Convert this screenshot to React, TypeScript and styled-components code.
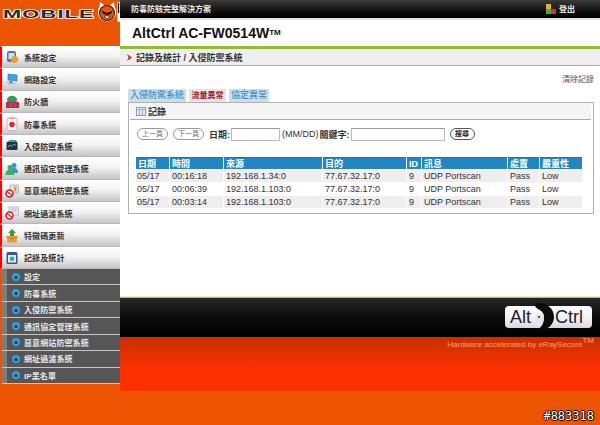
import React from "react";
import styled, { createGlobalStyle } from "styled-components";

const Global = createGlobalStyle`
  html, body { margin: 0; padding: 0; background: #ec5400; }
  * { box-sizing: border-box; }
  body { font-family: "Liberation Sans", "Noto Sans CJK TC", sans-serif; }
`;
const Page = styled.div`
  position: relative; width: 600px; height: 425px; overflow: hidden; background: #ec5400;
  display: grid; grid-template-columns: 120px 480px; align-items: start;
  font-family: "Liberation Sans", "Noto Sans CJK TC", sans-serif;
`;
const Sidebar = styled.aside`display: flex; flex-direction: column;`;
const LogoBox = styled.div`
  height: 46px; display: flex; align-items: flex-start; padding: 1px 0 0 3px;
  & > svg { flex: none; }
`;
const LogoWord = styled.div`
  flex: none; width: 95px; height: 20px; padding-top: 6px;
  font-size: 11px; line-height: 14px; font-weight: 700; color: #2a2a2a;
  -webkit-text-stroke: 1.3px #fff; paint-order: stroke fill;
  letter-spacing: .6px; transform: scaleX(1.98); transform-origin: left center;
`;
const Menu = styled.nav`display: flex; flex-direction: column;`;
const Item = styled.div`
  height: 22.3px; display: flex; align-items: center; gap: 5px; padding-left: 3px;
  border-left: 2px solid #f00; border-bottom: 1px solid #b8b8b8; border-top: 1px solid #fff;
  background: linear-gradient(#fff 0%, #f2f2f2 45%, #c6c6c6 100%);
  font-size: 8px; font-weight: 700; color: #333; letter-spacing: .1px;
`;
const IconSlot = styled.span`width: 14px; height: 14px; display: block; flex: none;`;
const SubMenu = styled.div`display: flex; flex-direction: column; margin-left: 2px;`;
const SubItem = styled.div`
  height: 16.45px; display: flex; align-items: center; gap: 4px; padding-left: 10px;
  background: linear-gradient(90deg, #7c7c7c 0 5px, #565656 5px);
  border-bottom: 1px solid #c4c4c4;
  font-size: 8px; font-weight: 700; color: #e6e6e6; letter-spacing: .1px;
`;
const Main = styled.main`display: flex; flex-direction: column;`;
const TopBar = styled.header`
  height: 18px; display: flex; align-items: center; justify-content: space-between;
  padding: 0 25px 1px 11px; background: linear-gradient(#3a3a3a, #0a0a0a 70%, #000);
  font-size: 8px; font-weight: 700; color: #e8e8e8;
`;
const Logout = styled.div`display: flex; align-items: center; gap: 3px; font-size: 8px;`;
const TitleBar = styled.div`
  height: 28px; background: #fff; border-top: 2px solid #e6e6e6; padding-left: 12px;
  display: flex; align-items: center; font-size: 14px; font-weight: 700; color: #111;
`;
const Sup = styled.sup`font-size: 8px; line-height: 0; vertical-align: 4px; font-weight: 700;`;
const GreenBar = styled.div`height: 3px; background: #8fbf2a;`;
const Crumb = styled.div`
  height: 17px; background: #eee; border-bottom: 1px solid #aaa; padding-left: 7px;
  display: flex; align-items: center; gap: 4px; font-size: 9px; font-weight: 700; color: #333;
`;
const Content = styled.section`
  height: 230px; background: #fff; padding: 7px 6px 0 8px; display: flex; flex-direction: column;
`;
const Clear = styled.div`
  height: 14px; text-align: right; font-size: 8px; line-height: 14px; color: #555;
`;
const Tabs = styled.div`display: flex; gap: 3px; margin-top: 2px; height: 13px;`;
const Tab = styled.div<{ $alert?: boolean }>`
  height: 13px; padding: 0 ${p => (p.$alert ? "2.5px" : "2px")}; line-height: 13px;
  font-size: ${p => (p.$alert ? 8 : 9)}px; font-weight: ${p => (p.$alert ? 700 : 400)};
  color: ${p => (p.$alert ? "#a8101c" : "#2b7fb8")};
  background: ${p => (p.$alert ? "#e4e4e4" : "#c6e0ee")};
  white-space: nowrap;
`;
const Panel = styled.div`
  height: 112px; border: 1px solid #b0b0b0; padding: 0 0 0 1px; display: flex; flex-direction: column;
`;
const PanelHead = styled.div`
  height: 17px; margin-right: 2px; background: #f5f5f5; border-bottom: 1px solid #aaa;
  display: flex; align-items: center; gap: 2px; padding-left: 6px;
  font-size: 9px; font-weight: 700; color: #333;
`;
const Search = styled.form`
  display: flex; align-items: center; margin: 7px 0 0 7px; height: 14px;
  font-size: 9px; color: #333;
`;
const Pill = styled.button<{ $strong?: boolean }>`
  height: 12px; width: ${p => (p.$strong ? 25 : 31)}px; padding: 0; border-radius: 7px; background: #fff; flex: none;
  border: 1px solid ${p => (p.$strong ? "#555" : "#999")}; margin-right: ${p => (p.$strong ? 0 : 5)}px;
  font: ${p => (p.$strong ? 700 : 400)} 7px "Liberation Sans", "Noto Sans CJK TC", sans-serif;
  color: ${p => (p.$strong ? "#222" : "#777")}; line-height: 10px;
`;
const Field = styled.input<{ $w: number }>`
  flex: none; width: ${p => p.$w}px; height: 13px; margin: 0 2px 0 1px; padding: 0;
  border: 1px solid #bbb; border-top-color: #999; background: #fff; outline: 0;
`;
const Label = styled.span`font-weight: 700; white-space: nowrap;`;
const Plain = styled.span`white-space: nowrap;`;
const Gap = styled.span<{ $w: number }>`width: ${p => p.$w}px; flex: none;`;
const Table = styled.table`
  width: 448px; margin: 15px 0 0 5px; border-collapse: separate; border-spacing: 1px 1px;
  table-layout: fixed; font-size: 9px; color: #333;
`;
const Th = styled.th<{ $w: number }>`
  width: ${p => p.$w}px; height: 12px; padding: 0 0 0 2px; background: #2286c3; color: #fff;
  text-align: left; font-weight: 700; font-size: 9px; line-height: 10px; border-top: 1px solid #1a78b4;
`;
const Tr = styled.tr<{ $shade: boolean }>`
  & > td { background: ${p => (p.$shade ? "#eee" : "#fff")}; }
`;
const Td = styled.td`
  height: 12px; padding: 0 0 0 2px; white-space: nowrap; line-height: 11px;
  &:first-child { padding-left: 1px; }
`;
const GreenLine = styled.div`height: 2px; background: #9bd04a; border-top: 1px solid #e6f4c8;`;
const FooterBlack = styled.div`
  height: 39px; background: linear-gradient(#262626, #0c0c0c 50%, #000);
  display: flex; justify-content: flex-end; align-items: flex-start; padding: 8px 8px 0 0;
`;
const AltLogo = styled.div`
  width: 87px; height: 22px; background: linear-gradient(#fff, #f0f0f0 60%, #d8d8d8); border-radius: 4px;
  display: flex; align-items: center; padding-left: 5px;
  font-size: 18px; color: #222; line-height: 22px;
  & > svg { flex: none; margin: -3px 1px; }
`;
const FooterRed = styled.div`
  height: 54px; background: linear-gradient(#c43000, #e83000 35%, #ff3000 65%);
  display: flex; justify-content: flex-end; padding: 2px 6px 0 0;
  font-size: 8px; font-weight: 400; line-height: 12px; color: #f68050; white-space: nowrap;
  text-shadow: 0 0 .6px #f68050;
`;
const FootSup = styled.sup`font-size: 8px; line-height: 0; vertical-align: 4px; font-weight: 400;`;
const Stamp = styled.div`
  position: absolute; right: 6px; top: 410px; font-family: "DejaVu Sans Mono", monospace; font-size: 12px;
  line-height: 12px; color: #fff; text-shadow: 1px 0 #000, -1px 0 #000, 0 1px #000, 0 -1px #000;
`;

const Mascot = () => (
  <svg width="22" height="22" viewBox="0 0 22 22">
    <path d="M2 1l4.500 3.500h5L16 1l.6 5a9.200 9.200 0 1 1-15.200 0z" fill="#fff" />
    <circle cx="9" cy="12" r="8" fill="#111" />
    <circle cx="9" cy="12" r="7" fill="#ec5400" />
    <path d="M3 9.500l6 2.500 6-2.500-2.500 3.500-3.500 1-3.500-1z" fill="#111" />
    <path d="M6 15h6l-3 3z" fill="#fff" stroke="#111" strokeWidth=".6" />
    <rect x="19" y="1" width="3" height="20" rx="1" fill="#fff" />
    <rect x="19.800" y="2" width="1.400" height="10" fill="#111" />
  </svg>
);
const i = { width: 14, height: 14, viewBox: "0 0 14 14" };
const icons: React.ReactNode[] = [
  <svg {...i}><rect x="2" y="1" width="9" height="11" rx="2" fill="#4a78b8" /><rect x="3.5" y="3" width="6" height="6" fill="#cfe0f2" /><circle cx="9.5" cy="9.5" r="3.6" fill="#f2a024" /></svg>,
  <svg {...i}><path d="M3 2l9 1v6l-9-1z" fill="#39a6d8" stroke="#2a6f9e" strokeWidth=".6" /><path d="M1 9l7 1 4 2-8 1z" fill="#9cc7e2" /><rect x="5" y="9" width="2" height="2" fill="#57768c" /></svg>,
  <svg {...i}><ellipse cx="7" cy="5" rx="5" ry="4.2" fill="#2e9e5a" /><rect x="1" y="7" width="13" height="6" rx="1" fill="#a8224a" /><path d="M2 9h11M2 11h11M6 7v6M10 7v6" stroke="#e05a80" strokeWidth=".6" /></svg>,
  <svg {...i}><rect x="2" y="1" width="10" height="12.5" rx="1" fill="#f0eef2" stroke="#b8a8c0" strokeWidth=".7" /><circle cx="7" cy="7.5" r="2.7" fill="#e02a2a" /><rect x="4" y="0.5" width="6" height="1.5" fill="#c8a8b8" /></svg>,
  <svg {...i}><rect x="1.5" y="3" width="11" height="8" rx="1" fill="#234" /><path d="M3 8l2-2 1.500 1.500L9 5l2 1.500" stroke="#4fd06a" fill="none" /><path d="M2 3l3-2h6l1 2z" fill="#3a9e9e" /></svg>,
  <svg {...i}><circle cx="9" cy="3.500" r="2.500" fill="#3d93c9" /><path d="M5 11c0-4 2-5 4-5s4 1 4 5z" fill="#3d93c9" /><circle cx="5" cy="5.500" r="2.500" fill="#3cae6a" /><path d="M0.500 13c0-4 2-5.500 4.500-5.500S9.500 9 9.500 13z" fill="#3cae6a" /></svg>,
  <svg {...i}><rect x="5" y="1" width="8.500" height="8" rx="1" fill="#dce6f0" stroke="#7a96b0" strokeWidth=".6" /><rect x="9" y="2.500" width="2.500" height="5" fill="#e8a020" /><circle cx="4.500" cy="9.500" r="3.500" fill="#fff" stroke="#d81e1e" strokeWidth="1.500" /><path d="M2 7.500l5 4" stroke="#d81e1e" strokeWidth="1.300" /></svg>,
  <svg {...i}><rect x="4" y="1" width="9.500" height="8" fill="#e6edf4" stroke="#8ea6bc" strokeWidth=".6" /><path d="M6 3h6M6 5h6" stroke="#7a96b0" strokeWidth=".6" /><circle cx="4.500" cy="9.500" r="3.500" fill="#fff" stroke="#d81e1e" strokeWidth="1.500" /><path d="M2 7.500l5 4" stroke="#d81e1e" strokeWidth="1.300" /></svg>,
  <svg {...i}><path d="M7 0l4 4H9v3H5V4H3z" fill="#2e9e3e" /><path d="M1.500 7h11l-1 6.500h-9z" fill="#e89c36" /><path d="M1.500 7L7 10l5.500-3" stroke="#b86a18" fill="none" strokeWidth=".7" /></svg>,
  <svg {...i}><rect x="1.500" y="1" width="11" height="12" rx="1.500" fill="#3a5a78" /><rect x="3" y="4" width="8" height="7.500" fill="#d8ecf6" /><circle cx="7" cy="7.700" r="2.300" fill="#3a9ed0" /></svg>,
];
const Bullet = () => (
  <svg width="8" height="8" viewBox="0 0 8 8">
    <circle cx="4" cy="4" r="4" fill="#2f9ee0" />
    <circle cx="4" cy="4.500" r="1.500" fill="#0d3550" />
  </svg>
);
const Arrow = () => (
  <svg width="5" height="7" viewBox="0 0 5 7"><path d="M0 0l5 3.500L0 7l1.500-3.500z" fill="#e0262c" /></svg>
);
const LogoutIcon = () => (
  <svg width="10" height="10" viewBox="0 0 10 10">
    <rect width="5" height="5" fill="#e2b030" /><rect x="5" y="5" width="5" height="5" fill="#d83030" />
    <rect y="5" width="5" height="5" fill="#4aa848" /><rect x="5" y="1" width="3" height="4" fill="#222" />
  </svg>
);
const GridIcon = () => (
  <svg width="10" height="9" viewBox="0 0 10 9">
    <rect x=".5" y=".5" width="9" height="8" fill="#dfe8f6" stroke="#8aa0c0" />
    <path d="M.5 2.500h9M3.500 2v6M6.500 2v6" stroke="#8aa0c0" strokeWidth=".7" />
  </svg>
);
const Crescent = () => (
  <svg width="22" height="28" viewBox="0 0 22 28">
    <path d="M3 1c1-.5 3-1 6-.5C17 1 22 7 22 14s-6 13.500-15 13.500c-2 0-3-.5-3-1 6-1 8-7 8-12C12 9 8 7 6 6 4 5 2.500 3 3 1z" fill="#0c0c0c" />
    <path d="M11 10c2 4 1 10-4 14-2 1-4 0-5-2l2-3-2-2 3-2-2-4 5 1z" fill="#e4e4e4" />
    <circle cx="7" cy="14" r=".9" fill="#111" />
  </svg>
);

const items = ["系統設定", "網路設定", "防火牆", "防毒系統", "入侵防禦系統", "通訊協定管理系統", "惡意網站防禦系統", "網址過濾系統", "特徵碼更新", "記錄及統計"];
const subs = ["設定", "防毒系統", "入侵防禦系統", "通訊協定管理系統", "惡意網站防禦系統", "網址過濾系統", "IP黑名單"];
const cols: [string, number][] = [["日期", 33], ["時間", 53], ["來源", 98], ["目的", 83], ["ID", 14], ["訊息", 85], ["處置", 31], ["嚴重性", 42]];
const rows = [
  ["05/17", "00:16:18", "192.168.1.34:0", "77.67.32.17:0", "9", "UDP Portscan", "Pass", "Low"],
  ["05/17", "00:06:39", "192.168.1.103:0", "77.67.32.17:0", "9", "UDP Portscan", "Pass", "Low"],
  ["05/17", "00:03:14", "192.168.1.103:0", "77.67.32.17:0", "9", "UDP Portscan", "Pass", "Low"],
];

export default function App() {
  return (
    <Page>
      <Global />
      <Sidebar>
        <LogoBox>
          <LogoWord>MOBILE</LogoWord>
          <Mascot />
        </LogoBox>
        <Menu>
          {items.map((t, n) => (
            <Item key={t}><IconSlot>{icons[n]}</IconSlot>{t}</Item>
          ))}
        </Menu>
        <SubMenu>
          {subs.map(t => (
            <SubItem key={t}><Bullet />{t}</SubItem>
          ))}
        </SubMenu>
      </Sidebar>
      <Main>
        <TopBar>
          <span>防毒防駭完整解決方案</span>
          <Logout><LogoutIcon />登出</Logout>
        </TopBar>
        <TitleBar>AltCtrl AC-FW0514W<Sup>TM</Sup></TitleBar>
        <GreenBar />
        <Crumb><Arrow />記錄及統計 / 入侵防禦系統</Crumb>
        <Content>
          <Clear>清除記錄</Clear>
          <Tabs>
            <Tab>入侵防禦系統</Tab>
            <Tab $alert>流量異常</Tab>
            <Tab>協定異常</Tab>
          </Tabs>
          <Panel>
            <PanelHead><GridIcon />記錄</PanelHead>
            <Search>
              <Pill type="button">上一頁</Pill>
              <Pill type="button">下一頁</Pill>
              <Label>日期:</Label>
              <Field $w={49} readOnly />
              <Plain>(MM/DD)</Plain>
              <Gap $w={1} />
              <Label>關鍵字:</Label>
              <Field $w={94} readOnly />
              <Gap $w={3} />
              <Pill type="button" $strong>搜尋</Pill>
            </Search>
            <Table>
              <thead>
                <tr>{cols.map(([c, w]) => <Th key={c} $w={w}>{c}</Th>)}</tr>
              </thead>
              <tbody>
                {rows.map((r, n) => (
                  <Tr key={n} $shade={n % 2 === 0}>
                    {r.map((c, k) => <Td key={k}>{c}</Td>)}
                  </Tr>
                ))}
              </tbody>
            </Table>
          </Panel>
        </Content>
        <GreenLine />
        <FooterBlack>
          <AltLogo>Alt<Crescent />Ctrl</AltLogo>
        </FooterBlack>
        <FooterRed>
          <span>Hardware accelerated by eRaySecure<FootSup>TM</FootSup></span>
        </FooterRed>
      </Main>
      <Stamp>#883318</Stamp>
    </Page>
  );
}
